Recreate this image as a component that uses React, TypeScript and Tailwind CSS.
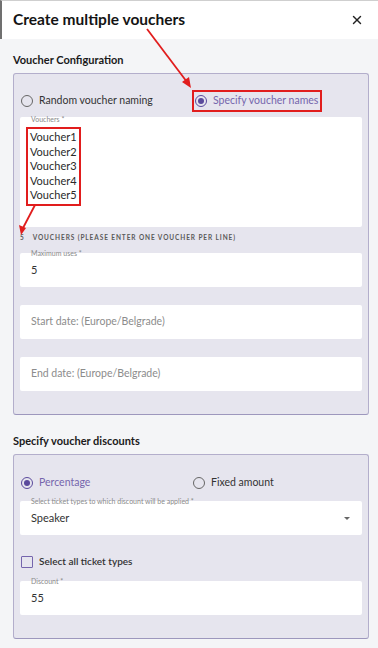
import { X } from "lucide-react";

const Radio = ({ checked }: { checked?: boolean }) => (
  <span
    className={
      "flex h-[12px] w-[12px] shrink-0 items-center justify-center rounded-full border-[1.5px] " +
      (checked ? "border-[#5b4a9c]" : "border-[#666]")
    }
  >
    {checked && <span className="h-[6px] w-[6px] rounded-full bg-[#5b4a9c]" />}
  </span>
);

const Field = ({ label, value, placeholder }: { label?: string; value?: string; placeholder?: string }) => (
  <div className="relative flex h-[34px] items-center rounded-[2px] bg-white px-[11px]">
    {label && (
      <span className="absolute -top-[4px] left-[11px] text-[7px] leading-[9px] text-[#8a8a8a]">{label}</span>
    )}
    {value ? (
      <span className="text-[11px] text-[#333]">{value}</span>
    ) : (
      <span className="text-[10.5px] text-[#8c8c8c]">{placeholder}</span>
    )}
  </div>
);

export default function App() {
  const vouchers = ["Voucher1", "Voucher2", "Voucher3", "Voucher4", "Voucher5"];

  return (
    <div className="relative h-[648px] w-[378px] overflow-hidden bg-[#f4f5f7] font-['Lato',sans-serif]">
      <div className="flex h-[39px] items-center justify-between border-l-2 border-t border-l-[#707070] border-t-[#cfcfcf] bg-white pl-[11px] pr-[14px]">
        <h1 className="text-[15.5px] font-bold text-[#141414]">Create multiple vouchers</h1>
        <X size={14} strokeWidth={2.5} className="text-[#222]" />
      </div>

      <div className="px-[13px] pr-[9px]">
        <h2 className="pt-[14px] text-[11px] font-bold leading-[14px] text-[#1a1a1a]">Voucher Configuration</h2>
        <div className="mt-[6px] rounded-[3px] border border-[#b3aecb] border-b-[#9d97bd] bg-[#e6e5ee] px-[6px] pb-[23px] pt-[16px]">
          <div className="grid h-[22px] grid-cols-2 items-center">
            <div className="flex items-center gap-[6px] pl-[1px]">
              <Radio />
              <span className="text-[10.5px] text-[#333]">Random voucher naming</span>
            </div>
            <div className="flex items-center">
              <div className="ml-[1px] flex h-[22px] items-center gap-[6px] border-2 border-[#e11d1d] pl-[1px] pr-[2px]">
                <Radio checked />
                <span className="text-[10.5px] text-[#7565ad]">Specify voucher names</span>
              </div>
            </div>
          </div>

          <div className="relative mt-[5px] h-[110px] rounded-[2px] bg-white px-[6px] pt-[10px]">
            <span className="absolute -top-[2px] left-[11px] text-[7px] leading-[9px] text-[#8a8a8a]">Vouchers *</span>
            <div className="inline-block border-2 border-[#e11d1d] px-[2px] py-[1px]">
              {vouchers.map((v) => (
                <div key={v} className="text-[11px] leading-[14.5px] text-[#2a2a2a]">
                  {v}
                </div>
              ))}
            </div>
          </div>

          <div className="mt-[6px] flex gap-[8px] text-[6.5px] font-bold leading-[9px] tracking-[0.14em] text-[#5a5a5a]">
            <span>5</span>
            <span>VOUCHERS (PLEASE ENTER ONE VOUCHER PER LINE)</span>
          </div>

          <div className="mt-[11px] flex flex-col gap-[18px]">
            <Field label="Maximum uses *" value="5" />
            <Field placeholder="Start date: (Europe/Belgrade)" />
            <Field placeholder="End date: (Europe/Belgrade)" />
          </div>
        </div>

        <h2 className="mt-[19px] text-[11px] font-bold leading-[14px] text-[#1a1a1a]">Specify voucher discounts</h2>
        <div className="mt-[6px] rounded-[3px] border border-[#b3aecb] border-b-[#9d97bd] bg-[#e6e5ee] px-[6px] pb-[23px] pt-[18px]">
          <div className="grid h-[20px] grid-cols-2 items-center">
            <div className="flex items-center gap-[6px] pl-[1px]">
              <Radio checked />
              <span className="text-[10.5px] text-[#7565ad]">Percentage</span>
            </div>
            <div className="flex items-center gap-[6px] pl-[2px]">
              <Radio />
              <span className="text-[10.5px] text-[#333]">Fixed amount</span>
            </div>
          </div>

          <div className="relative mt-[8px] flex h-[34px] items-center justify-between rounded-[2px] bg-white pl-[11px] pr-[12px]">
            <span className="absolute -top-[4px] left-[11px] text-[7px] leading-[9px] text-[#8a8a8a]">
              Select ticket types to which discount will be applied *
            </span>
            <span className="text-[11px] text-[#333]">Speaker</span>
            <span className="h-0 w-0 border-x-[3px] border-t-[3px] border-x-transparent border-t-[#666]" />
          </div>

          <div className="mt-[19px] flex items-center gap-[6px] pl-[1px]">
            <span className="h-[12px] w-[12px] rounded-[1px] border-[1.5px] border-[#7565ad]" />
            <span className="text-[10px] font-semibold text-[#333]">Select all ticket types</span>
          </div>

          <div className="mt-[12px]">
            <Field label="Discount *" value="55" />
          </div>
        </div>
      </div>

      <svg className="pointer-events-none absolute left-0 top-0" width="378" height="648">
        <line x1="147" y1="29" x2="187" y2="82" stroke="#e11d1d" strokeWidth="1.8" />
        <polygon points="191,88 182,82 189,77" fill="#e11d1d" />
        <line x1="35" y1="205" x2="23" y2="228" stroke="#e11d1d" strokeWidth="1.8" />
        <polygon points="21,235 19,225 26,228" fill="#e11d1d" />
      </svg>
    </div>
  );
}
